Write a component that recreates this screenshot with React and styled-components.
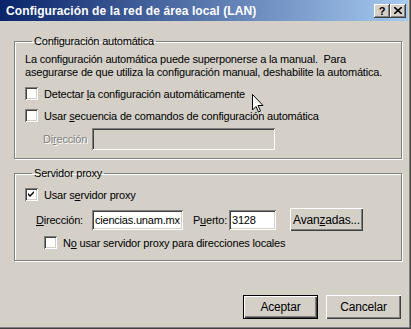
import React from "react";
import styled, { createGlobalStyle } from "styled-components";

const GlobalStyle = createGlobalStyle`
  body {
    margin: 0;
    background: #d4d0c8;
    font-family: "Liberation Sans", Arial, sans-serif;
    font-size: 11px;
  }
`;

const Window = styled.div`
  position: relative;
  width: 411px;
  height: 329px;
  box-sizing: border-box;
  padding: 0 3px 3px 0;
  background: #d4d0c8;
  box-shadow: inset -1px -1px #404040, inset -2px -2px #808080;
  display: flex;
  flex-direction: column;
  overflow: hidden;
  color: #000;
  letter-spacing: -0.2px;
`;

const TitleBar = styled.div`
  height: 21px;
  display: flex;
  align-items: center;
  padding: 0 2px 0 6px;
  background: linear-gradient(to right, #0a246a, #a6caf0);
`;

const Title = styled.div`
  flex: 1;
  color: #fff;
  font-weight: bold;
  font-size: 12px;
  letter-spacing: 0.1px;
  white-space: nowrap;
`;

const CaptionButton = styled.div`
  width: 16px;
  height: 14px;
  box-sizing: border-box;
  background: #d4d0c8;
  box-shadow: inset -1px -1px #404040, inset 1px 1px #fff,
    inset -2px -2px #808080;
  display: flex;
  align-items: center;
  justify-content: center;
  font-weight: bold;
  font-size: 11px;
  letter-spacing: 0;
`;

const Body = styled.div`
  flex: 1;
  display: flex;
  flex-direction: column;
  padding: 14px 6px 0 14px;
`;

const Group = styled.fieldset`
  margin: ${(p) => p.$mt || 0}px 0 0 0;
  padding: ${(p) => p.$pad};
  border: 1px solid #808080;
  box-shadow: inset 1px 1px #fff, 1px 1px #fff;
  min-width: 0;
  height: ${(p) => p.$h}px;
  box-sizing: border-box;
  display: flex;
  flex-direction: column;
`;

const Legend = styled.legend`
  padding: 0 2px;
  margin-left: 7px;
  line-height: 13px;
`;

const Para = styled.p`
  margin: 3px 0 0 0;
  line-height: 13px;
  white-space: nowrap;
`;

const CheckRow = styled.label`
  display: flex;
  align-items: center;
  height: 13px;
  margin-top: ${(p) => p.$mt || 0}px;
  margin-left: ${(p) => p.$ml || 0}px;
  gap: 6px;
  white-space: nowrap;
`;

const Box = styled.span`
  width: 13px;
  height: 13px;
  box-sizing: border-box;
  background: #fff;
  box-shadow: inset 1px 1px #808080, inset -1px -1px #fff,
    inset 2px 2px #404040, inset -2px -2px #d4d0c8;
  display: flex;
  align-items: center;
  justify-content: center;
  flex: none;
`;

const Field = styled.div`
  display: flex;
  align-items: center;
  margin-top: ${(p) => p.$mt || 0}px;
  margin-left: ${(p) => p.$ml || 0}px;
  white-space: nowrap;
`;

const Label = styled.span`
  color: ${(p) => (p.$disabled ? "#808080" : "#000")};
  text-shadow: ${(p) => (p.$disabled ? "1px 1px #fff" : "none")};
  margin-right: ${(p) => p.$mr || 0}px;
`;

const Input = styled.div`
  width: ${(p) => p.$w}px;
  height: ${(p) => p.$h}px;
  box-sizing: border-box;
  background: ${(p) => (p.$disabled ? "#d4d0c8" : "#fff")};
  box-shadow: inset 1px 1px #808080, inset -1px -1px #fff,
    inset 2px 2px #404040, inset -2px -2px #d4d0c8;
  padding: 0 3px;
  display: flex;
  align-items: center;
  margin-right: ${(p) => p.$mr || 0}px;
  overflow: hidden;
`;

const Button = styled.div`
  width: ${(p) => p.$w || 75}px;
  height: ${(p) => p.$h || 24}px;
  box-sizing: border-box;
  display: flex;
  align-items: center;
  justify-content: center;
  background: #d4d0c8;
  box-shadow: ${(p) =>
    p.$default
      ? "inset 0 0 0 1px #000, inset 2px 2px #fff, inset -2px -2px #404040, inset -3px -3px #808080"
      : "inset 1px 1px #fff, inset -1px -1px #404040, inset -2px -2px #808080"};
  margin-left: ${(p) => p.$ml || 0}px;
  font-size: 12px;
`;

const Footer = styled.div`
  display: flex;
  justify-content: flex-end;
  margin-top: 34px;
  padding-right: 1px;
`;

const Cursor = styled.svg`
  position: absolute;
  left: 252px;
  top: 94px;
`;

const Check = () => (
  <svg width="7" height="7" viewBox="0 0 7 7">
    <path d="M0 2 L2 4 L6 0 L6 2 L2 6 L0 4 Z" fill="#000" />
  </svg>
);

export default function App() {
  return (
    <>
      <GlobalStyle />
      <Window>
        <TitleBar>
          <Title>Configuración de la red de área local (LAN)</Title>
          <CaptionButton>?</CaptionButton>
          <CaptionButton>
            <svg width="8" height="7" viewBox="0 0 8 7">
              <path d="M0 0 L8 7 M8 0 L0 7" stroke="#000" strokeWidth="1.6" />
            </svg>
          </CaptionButton>
        </TitleBar>
        <Body>
          <Group $h={124} $pad="2px 8px 0 10px">
            <Legend>Configuración automática</Legend>
            <Para>
              La configuración automática puede superponerse a la manual.&nbsp;
              Para
              <br />
              asegurarse de que utiliza la configuración manual, deshabilite la
              automática.
            </Para>
            <CheckRow $mt={8}>
              <Box />
              <span>
                Detectar <u>l</u>a configuración automáticamente
              </span>
            </CheckRow>
            <CheckRow $mt={9}>
              <Box />
              <span>
                Usar <u>s</u>ecuencia de comandos de configuración automática
              </span>
            </CheckRow>
            <Field $mt={6} $ml={18}>
              <Label $disabled $mr={5}>
                Di<u>r</u>ección
              </Label>
              <Input $w={183} $h={22} $disabled />
            </Field>
          </Group>
          <Group $mt={8} $h={94} $pad="2px 8px 0 10px">
            <Legend>Servidor proxy</Legend>
            <CheckRow $mt={6}>
              <Box>
                <Check />
              </Box>
              <span>
                Usar s<u>e</u>rvidor proxy
              </span>
            </CheckRow>
            <Field $mt={7} $ml={11}>
              <Label $mr={9}>
                <u>D</u>irección:
              </Label>
              <Input $w={91} $h={20} $mr={10}>
                ciencias.unam.mx
              </Input>
              <Label $mr={2}>
                P<u>u</u>erto:
              </Label>
              <Input $w={47} $h={20} $mr={14}>
                3128
              </Input>
              <Button $w={73} $h={23}>
                Avan<u>z</u>adas...
              </Button>
            </Field>
            <CheckRow $mt={5} $ml={19}>
              <Box />
              <span>
                N<u>o</u> usar servidor proxy para direcciones locales
              </span>
            </CheckRow>
          </Group>
          <Footer>
            <Button $default>Aceptar</Button>
            <Button $ml={8}>Cancelar</Button>
          </Footer>
        </Body>
        <Cursor width="12" height="19" viewBox="0 0 12 19">
          <path
            d="M0.5 0.5 L0.5 16 L4 12.5 L6.5 18 L8.5 17 L6 11.5 L11 11.5 Z"
            fill="#fff"
            stroke="#000"
            strokeWidth="1"
          />
        </Cursor>
      </Window>
    </>
  );
}
